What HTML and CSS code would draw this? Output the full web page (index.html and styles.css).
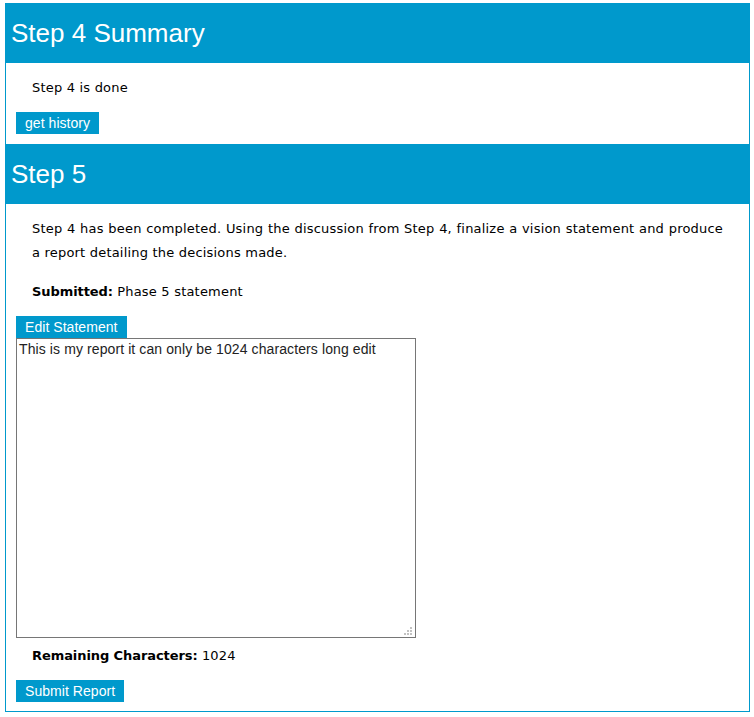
FILE: index.html
```html
<!DOCTYPE html>
<html>
<head>
<meta charset="utf-8">
<title>Steps</title>
<link rel="stylesheet" href="styles.css">
</head>
<body>
<div class="panel">
  <section class="step">
    <h2 class="step-title">Step 4 Summary</h2>
    <p class="text first">Step 4 is done</p>
    <button class="btn">get history</button>
  </section>
  <section class="step">
    <h2 class="step-title second">Step 5</h2>
    <p class="text first justify">Step 4 has been completed. Using the discussion from Step 4, finalize a vision statement and produce a report detailing the decisions made.</p>
    <p class="text submitted"><b class="label">Submitted:</b> Phase 5 statement</p>
    <button class="btn">Edit Statement</button>
    <textarea class="report">This is my report it can only be 1024 characters long edit</textarea>
    <p class="text remaining"><b class="label">Remaining Characters:</b> 1024</p>
    <button class="btn last">Submit Report</button>
  </section>
</div>
</body>
</html>
```

FILE: styles.css
```css
html, body {
  background: #ffffff;
}
body {
  margin: 3px 0 0 5px;
  font-family: "DejaVu Sans", Verdana, sans-serif;
  font-size: 13px;
  color: #000000;
}
.panel {
  width: 743px;
  border: 1px solid #0099cc;
  border-top: none;
}
.step {
  display: flow-root;
}
.step-title {
  margin: 0 -1px;
  height: 60px;
  line-height: 60px;
  padding-left: 6px;
  background: #0099cc;
  color: #ffffff;
  font-family: "Liberation Sans", Arial, sans-serif;
  font-size: 26px;
  font-weight: normal;
}
.step-title.second {
  margin-top: 10px;
}
.text {
  margin: 14px 26px 0 26px;
  padding-top: 1px;
  line-height: 24px;
  letter-spacing: 0.2px;
}
.text.first {
  margin-top: 12px;
}
.label {
  letter-spacing: -0.08px;
}
.justify {
  text-align: justify;
}
.text.remaining {
  margin-top: 5px;
}
.btn {
  display: block;
  margin: 12px 0 0 10px;
  height: 22px;
  padding: 0 9px;
  border: none;
  border-radius: 0;
  background: #0099cc;
  color: #ffffff;
  font-family: "Liberation Sans", Arial, sans-serif;
  font-size: 14px;
  line-height: 22px;
  letter-spacing: 0.05px;
}
.btn.last {
  margin-bottom: 9px;
}
.report {
  display: block;
  box-sizing: border-box;
  margin: 0 0 0 10px;
  width: 400px;
  height: 300px;
  padding: 2px;
  border: 1px solid #767676;
  font-family: "Liberation Sans", Arial, sans-serif;
  font-size: 14px;
  letter-spacing: 0.1px;
  color: #222222;
}
.report::-webkit-resizer {
  background-color: transparent;
  background-image:
    linear-gradient(#c2c2c2, #c2c2c2),
    linear-gradient(#c2c2c2, #c2c2c2),
    linear-gradient(#c2c2c2, #c2c2c2),
    linear-gradient(#c2c2c2, #c2c2c2),
    linear-gradient(#c2c2c2, #c2c2c2),
    linear-gradient(#c2c2c2, #c2c2c2);
  background-size: 2px 2px;
  background-repeat: no-repeat;
  background-position:
    10px 5px,
    7px 8px, 10px 8px,
    4px 11px, 7px 11px, 10px 11px;
}
```
